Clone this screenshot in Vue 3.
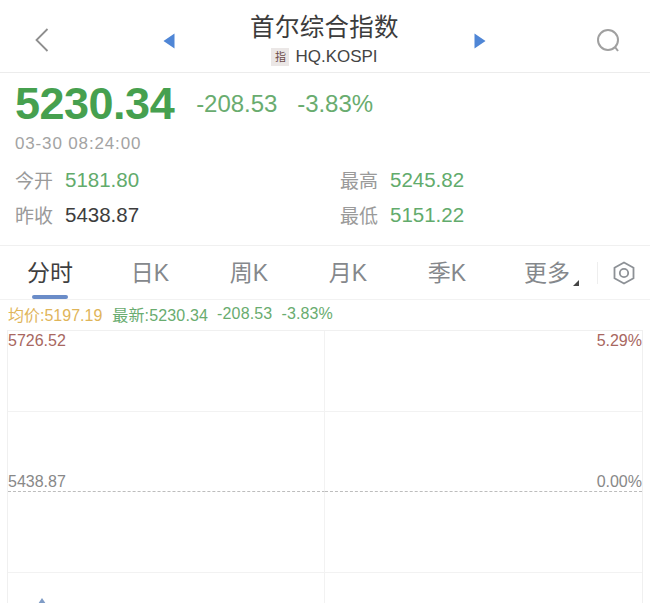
<script setup>
const tabs = [
  { label: '日K', w: 100 },
  { label: '周K', w: 98 },
  { label: '月K', w: 100 },
  { label: '季K', w: 98 }
]
</script>

<template>
  <div class="page">
    <header class="head">
      <svg class="back" width="16" height="26" viewBox="0 0 16 26"><path d="M13.5 2 L2.5 13 L13.5 24" fill="none" stroke="#8e8e8e" stroke-width="1.8"/></svg>
      <svg class="arrow-l" width="12" height="16" viewBox="0 0 12 16"><path d="M11.5 0.5 V15.5 L0.5 8 Z" fill="#4f86d6"/></svg>
      <div class="title">
        <div class="name">首尔综合指数</div>
        <div class="code"><span class="tag">指</span>HQ.KOSPI</div>
      </div>
      <svg class="arrow-r" width="12" height="16" viewBox="0 0 12 16"><path d="M0.5 0.5 V15.5 L11.5 8 Z" fill="#4f86d6"/></svg>
      <svg class="search" width="24" height="24" viewBox="0 0 24 24"><circle cx="11" cy="11" r="10" fill="none" stroke="#a0a0a0" stroke-width="2"/><path d="M18 18 L21 22" stroke="#a0a0a0" stroke-width="2"/></svg>
    </header>

    <section class="quote">
      <div class="price-row">
        <span class="price">5230.34</span>
        <span class="chg first">-208.53</span>
        <span class="chg">-3.83%</span>
      </div>
      <div class="time">03-30 08:24:00</div>
      <div class="stats">
        <div class="stat"><span class="k">今开</span><span class="v green">5181.80</span></div>
        <div class="stat"><span class="k">最高</span><span class="v green">5245.82</span></div>
        <div class="stat"><span class="k">昨收</span><span class="v dark">5438.87</span></div>
        <div class="stat"><span class="k">最低</span><span class="v green">5151.22</span></div>
      </div>
    </section>

    <nav class="tabs">
      <div class="tab active">分时<i class="bar"></i></div>
      <div v-for="t in tabs" :key="t.label" class="tab" :style="{ width: t.w + 'px' }">{{ t.label }}</div>
      <div class="tab more">更多<i class="corner"></i></div>
      <div class="sep"></div>
      <svg class="gear" width="24" height="26" viewBox="0 0 24 26"><path d="M12 2.5 L21.5 7.8 V18.2 L12 23.5 L2.5 18.2 V7.8 Z" fill="none" stroke="#8d9196" stroke-width="1.8"/><circle cx="12" cy="13" r="4.2" fill="none" stroke="#8d9196" stroke-width="1.8"/></svg>
    </nav>

    <div class="legend">
      <span class="avg">均价:5197.19</span>
      <span class="latest">最新:5230.34</span>
      <span class="latest">-208.53</span>
      <span class="latest">-3.83%</span>
    </div>

    <div class="chart">
      <div class="cell"></div><div class="cell"></div>
      <div class="cell"></div><div class="cell"></div>
      <div class="cell dash"></div><div class="cell dash"></div>
      <div class="cell"></div><div class="cell"></div>
      <span class="lbl tl red">5726.52</span>
      <span class="lbl tr red">5.29%</span>
      <span class="lbl ml">5438.87</span>
      <span class="lbl mr">0.00%</span>
      <svg class="peak" width="10" height="6" viewBox="0 0 10 6"><path d="M5 0 L9 6 H1 Z" fill="#7f9cc6"/></svg>
    </div>
  </div>
</template>

<style scoped>
.page {
  width: 650px;
  height: 603px;
  overflow: hidden;
  background: #fff;
  font-family: "Liberation Sans", "Noto Sans CJK SC", sans-serif;
  color: #333;
}
.head {
  height: 73px;
  box-sizing: border-box;
  border-bottom: 1px solid #ececec;
  display: flex;
  align-items: flex-start;
}
.back { margin: 27px 0 0 34px; }
.arrow-l { margin: 33px 0 0 113px; }
.title { width: 299px; text-align: center; }
.name { font-size: 24.5px; line-height: 28px; margin-top: 14px; color: #3c3c3c; letter-spacing: 0.3px; }
.code { display: flex; align-items: center; justify-content: center; font-size: 17px; line-height: 20px; margin-top: 5px; color: #444; }
.tag { width: 18px; height: 18px; background: #ebe7e6; color: #6b4a48; font-size: 11px; line-height: 18px; text-align: center; margin-right: 6px; }
.arrow-r { margin: 33px 0 0 0; }
.search { margin: 29px 0 0 111px; }

.quote { height: 173px; box-sizing: border-box; border-bottom: 1px solid #f0f0f0; padding: 0 15px; }
.price-row { display: flex; align-items: center; height: 61px; }
.price { font-size: 45px; font-weight: 700; color: #46a04f; line-height: 61px; letter-spacing: -0.5px; }
.chg { font-size: 24px; line-height: 61px; color: #69ac6f; margin-left: 20px; letter-spacing: -0.05px; }
.chg.first { margin-left: 22px; }
.time { font-size: 17px; line-height: 20px; color: #a3a3a3; letter-spacing: 0.85px; }
.stats { display: grid; grid-template-columns: 325px 1fr; grid-auto-rows: 35px; margin-top: 8px; }
.stat { display: flex; align-items: center; }
.k { font-size: 19px; color: #9a9a9a; width: 50px; }
.v { font-size: 20.5px; }
.green { color: #62ab6c; }
.dark { color: #3d3d3d; }

.tabs { height: 54px; box-sizing: border-box; border-bottom: 1px solid #f2f2f2; display: flex; align-items: center; color: #85888c; font-size: 23px; }
.tab { position: relative; text-align: center; height: 53px; line-height: 55px; flex: none; }
.tab.active { width: 100px; color: #3f3f3f; }
.bar { position: absolute; left: 32px; width: 36px; height: 4px; background: #6a8cc8; bottom: 0; border-radius: 2px; }
.more { width: 102px; }
.corner { position: absolute; right: 19px; bottom: 13px; width: 0; height: 0; border-left: 6px solid transparent; border-bottom: 6px solid #444; }
.sep { width: 1px; height: 22px; background: #eee; margin-left: -1px; }
.gear { margin-left: 14px; }

.legend { height: 30px; box-sizing: border-box; display: flex; align-items: center; gap: 9px; padding: 0 0 2px 8px; font-size: 16px; }
.avg { color: #dfb55a; margin-right: 1px; }
.latest { color: #69ac6f; letter-spacing: 0.15px; }

.chart {
  position: relative;
  margin-left: 7px;
  width: 636px;
  height: 280px;
  display: grid;
  grid-template-columns: 317px 317px;
  grid-auto-rows: 80.5px;
  border-top: 1px solid #f0f0f0;
  border-left: 1px solid #f0f0f0;
  border-right: 1px solid #f0f0f0;
  box-sizing: border-box;
}
.cell { box-sizing: border-box; border-bottom: 1px solid #f2f2f2; border-right: 1px solid #f2f2f2; }
.cell:nth-child(even) { border-right: none; }
.cell.dash { border-top: 1px dashed #bdbdbd; margin-top: -1px; }
.cell:nth-child(3), .cell:nth-child(4) { border-bottom: none; }
.lbl { position: absolute; font-size: 16px; line-height: 18px; color: #888; }
.red { color: #a8675f; }
.tl { left: 0; top: 1px; }
.tr { right: 0; top: 1px; }
.ml { left: 0; top: 142px; }
.mr { right: 0; top: 142px; }
.peak { position: absolute; left: 29px; top: 267px; }
</style>

<style>
html, body { margin: 0; padding: 0; background: #fff; }
</style>
